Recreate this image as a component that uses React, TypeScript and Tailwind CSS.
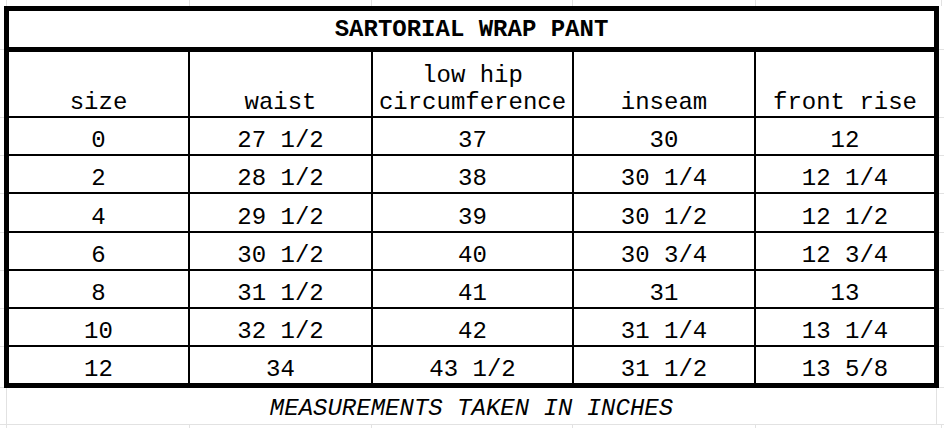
const colW = ['w-[181px]', 'w-[183px]', 'w-[201px]', 'w-[182px]', 'w-[178px]'];

const gridW = ['w-[7px]', 'w-[183px]', 'w-[182px]', 'w-[201px]', 'w-[183px]', 'w-[186px]'];

const headers = ['size', 'waist', 'low hip|circumference', 'inseam', 'front rise'];

const rows = [
  ['0', '27 1/2', '37', '30', '12'],
  ['2', '28 1/2', '38', '30 1/4', '12 1/4'],
  ['4', '29 1/2', '39', '30 1/2', '12 1/2'],
  ['6', '30 1/2', '40', '30 3/4', '12 3/4'],
  ['8', '31 1/2', '41', '31', '13'],
  ['10', '32 1/2', '42', '31 1/4', '13 1/4'],
  ['12', '34', '43 1/2', '31 1/2', '13 5/8'],
];

const rowH = ['h-[38px]', 'h-[38px]', 'h-[39px]', 'h-[38px]', 'h-[38px]', 'h-[38px]', 'h-[41px]'];

function GridStrip({ h }: { h: string }) {
  return (
    <div className={`flex ${h}`}>
      {gridW.map((w, i) => (
        <div key={i} className={`${w} border-r border-[#e2e2e2]`} />
      ))}
      <div className="flex-1" />
    </div>
  );
}

function TableRow({ h, cells, last, header }: { h: string; cells: string[]; last?: boolean; header?: boolean }) {
  return (
    <div className={`flex ${h}`}>
      <div className="w-[4px] border-b border-[#e2e2e2]" />
      <div className={`flex w-[935px] border-x-[5px] border-black ${last ? 'border-b-[5px]' : 'border-b-2'}`}>
        {cells.map((c, i) => (
          <div
            key={i}
            className={`${colW[i]} ${i < 4 ? 'border-r-2 border-black' : ''} flex items-end justify-center text-center leading-[27px]`}
          >
            {header ? (
              <span>
                {c.split('|').map((part, j) => (
                  <span key={j} className="block">{part}</span>
                ))}
              </span>
            ) : (
              c
            )}
          </div>
        ))}
      </div>
      <div className="flex-1 border-b border-[#e2e2e2]" />
    </div>
  );
}

export default function App() {
  return (
    <div className="w-[944px] h-[428px] overflow-hidden bg-white text-black text-[24px] font-['Liberation_Mono',monospace]">
      <GridStrip h="h-[6px]" />

      <div className="flex h-[46px]">
        <div className="w-[4px] border-b border-[#e2e2e2] mb-[2px]" />
        <div className="w-[935px] border-[5px] border-black flex items-center justify-center font-bold leading-[27px]">
          SARTORIAL WRAP PANT
        </div>
        <div className="flex-1 border-b border-[#e2e2e2] mb-[2px]" />
      </div>

      <TableRow h="h-[66px]" cells={headers} header />
      {rows.map((r, i) => (
        <TableRow key={i} h={rowH[i]} cells={r} last={i === rows.length - 1} />
      ))}

      <div className="flex h-[37px]">
        <div className="w-[7px] border-r border-b border-[#e2e2e2]" />
        <div className="w-[930px] border-r border-b border-[#e2e2e2] flex items-end justify-center italic leading-[27px] pb-[2px]">
          MEASUREMENTS TAKEN IN INCHES
        </div>
        <div className="flex-1 border-b border-[#e2e2e2]" />
      </div>

      <GridStrip h="h-[4px]" />
    </div>
  );
}
